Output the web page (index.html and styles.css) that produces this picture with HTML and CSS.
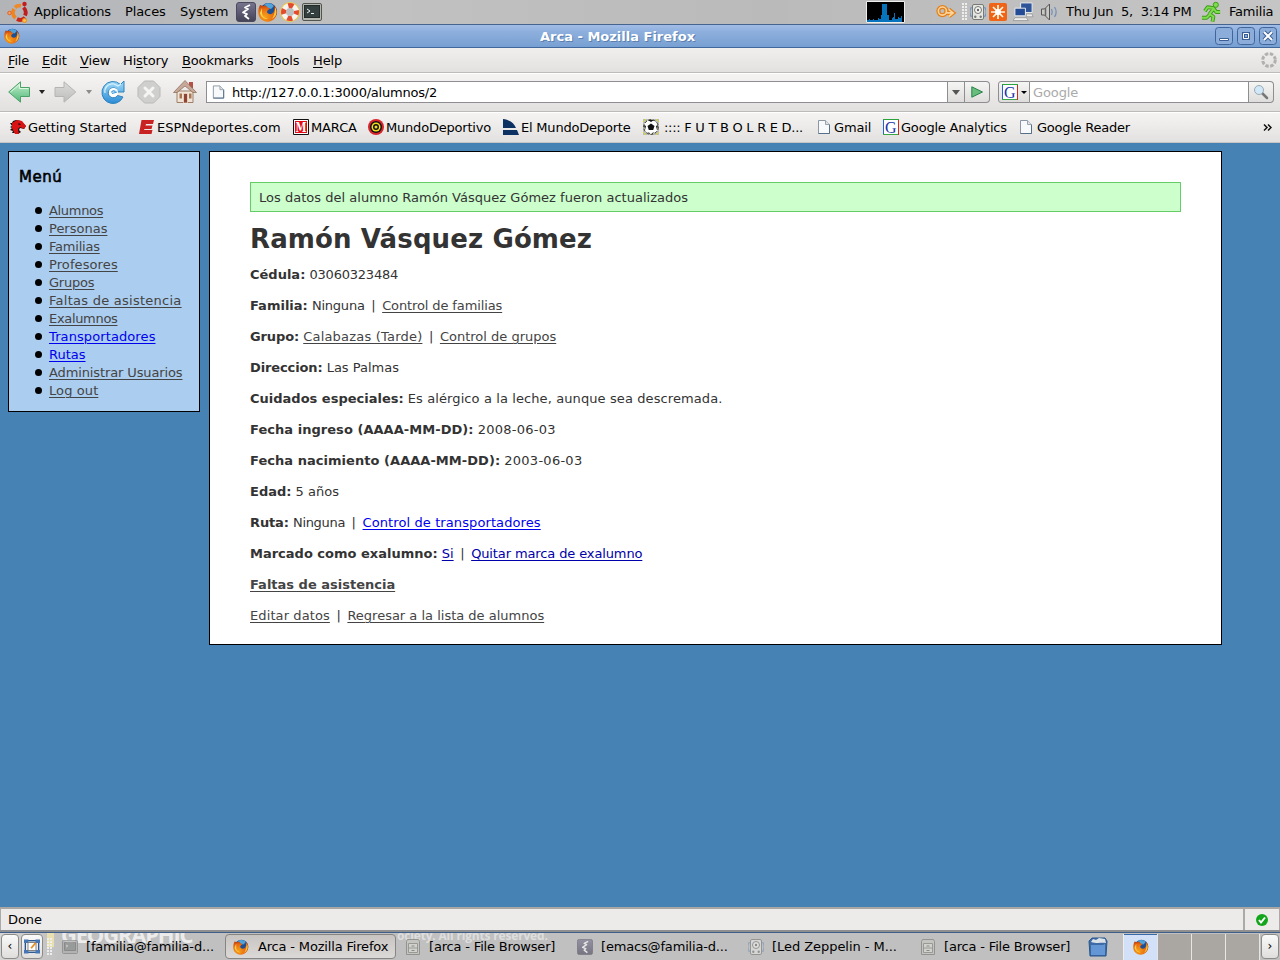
FILE: index.html
```html
<!DOCTYPE html>
<html lang="es">
<head>
<meta charset="utf-8">
<title>Arca - Mozilla Firefox</title>
<link rel="stylesheet" href="styles.css">
</head>
<body>
<svg class="defs" width="0" height="0">
  <defs>
    <radialGradient id="foxg" cx=".35" cy=".7" r=".8"><stop offset="0" stop-color="#f5a21a"/><stop offset=".6" stop-color="#e86a12"/><stop offset="1" stop-color="#a92c08"/></radialGradient>
    <linearGradient id="green" x2="0" y2="1"><stop offset="0" stop-color="#c8f0cf"/><stop offset="1" stop-color="#4fb878"/></linearGradient>
    <linearGradient id="grey" x2="0" y2="1"><stop offset="0" stop-color="#dcdcda"/><stop offset="1" stop-color="#bdbdbb"/></linearGradient>
    <linearGradient id="blue" x2="0" y2="1"><stop offset="0" stop-color="#a5dcf8"/><stop offset="1" stop-color="#2a8bd6"/></linearGradient>
    <linearGradient id="emx" x2="0" y2="1"><stop offset="0" stop-color="#77748f"/><stop offset="1" stop-color="#454357"/></linearGradient>
  </defs>
  <symbol id="firefox" viewBox="0 0 20 20">
    <circle cx="10.500" cy="9.500" r="8.500" fill="#1e4f93"/>
    <path d="M6 3C9 0 14 1 16 4l-3 3-4-1z" fill="#4da3dc"/>
    <path d="M2 3l3 1c2-1 4-.5 4 1 1 1 2 1 3 1-1 2-3 2-3 4 1 3 6 3 7-1 1-2 0-4-1-6 5 3 5 9 2 13-4 5-11 5-15 0C-.5 12 0 7 2 3z" fill="url(#foxg)"/>
    <path d="M2 11c1 4 4 6 8 6-4-1-6-3-6-6L4 6z" fill="#ffd34d"/>
    <path d="M17 5c3 5 1 10-3 12 2-3 3-7 3-12z" fill="#fbc83d"/>
  </symbol>
  <symbol id="page" viewBox="0 0 16 16">
    <path d="M2.500 1.500h7l4 4v9h-11z" fill="#f8f9fa" stroke="#8b97a5"/>
    <path d="M2.500 14.500h11v-9" fill="none" stroke="#567089"/>
    <path d="M9.500 1.500v4h4" fill="#dfe3e7" stroke="#9aa4af"/>
  </symbol>
  <symbol id="google" viewBox="0 0 16 16">
    <path d="M0 0h16v16H0z" fill="#fff"/>
    <path d="M.5 15V.5" stroke="#2166d8"/><path d="M0 .5h16" stroke="#2aa33a"/><path d="M15.500 1v15" stroke="#d8261c"/><path d="M0 15.500h15" stroke="#3aa847"/>
    <text x="7.800" y="13.500" class="g-letter">G</text>
  </symbol>
  <symbol id="emacs" viewBox="0 0 20 20">
    <rect x=".5" y=".5" width="19" height="19" rx="2.500" fill="url(#emx)" stroke="#4b4960"/>
    <path d="M14 3l-5 2.500 3 1.500-5 3.500 4 1.500-2 2 4 3" fill="none" stroke="#fff" stroke-width="1.800" stroke-linejoin="round"/>
  </symbol>
  <symbol id="cabinet" viewBox="0 0 16 16">
    <path d="M2.500 .5h11l1 2v13h-13v-13z" fill="#c4c5c1" stroke="#92938e"/>
    <path d="M3.500 4.500h9v9h-9zM3.500 9h9" fill="#d1d2ce" stroke="#989994"/><path d="M6.500 7h3M6.500 11.500h3" stroke="#888"/>
  </symbol>
  <symbol id="speaker" viewBox="0 0 16 16">
    <path d="M1.500 3c-2 3-2 7 0 10M14.500 3c2 3 2 7 0 10" fill="none" stroke="#7795bb" stroke-width="1.300"/>
    <rect x="2.500" y=".5" width="11" height="15" rx="1.500" fill="#e5e5e2" stroke="#777974"/>
    <circle cx="8" cy="6" r="3.500" fill="#f5f5f3" stroke="#777974"/><circle cx="8" cy="6" r="1.200" fill="#666"/>
    <circle cx="5.300" cy="12.800" r="1.200" fill="#777"/><circle cx="10.700" cy="12.800" r="1.200" fill="#777"/>
  </symbol>
</svg>

<header class="panel">
  <svg class="ubuntu" viewBox="0 0 22 22"><g fill="none" stroke-width="3.800"><path d="M8 6.500A7 7 0 0 1 14 4.800" stroke="#ef8a2a"/><path d="M16.500 6.500a7 7 0 0 1 1.500 8" stroke="#c01d1d"/><path d="M7 8a7 7 0 0 0 1.500 9" stroke="#f0841f"/><path d="M10 18c3 1.500 6 1 8-1.500" stroke="#c7281b"/></g><circle cx="2.500" cy="12" r="1.800" fill="#f3a065" stroke="#dd662a"/><circle cx="17.500" cy="3" r="2.200" fill="#c51b1b"/><circle cx="17.500" cy="19.500" r="2" fill="#ffc24a" stroke="#ee8b1c"/></svg>
  <span class="p-apps">Applications</span><span class="p-places">Places</span><span class="p-system">System</span>
  <div class="launchers">
    <svg><use href="#emacs"/></svg>
    <svg><use href="#firefox"/></svg>
    <svg viewBox="0 0 20 20"><circle cx="10" cy="10" r="9" fill="none" stroke="#e9c84e" stroke-width="2"/><circle cx="10" cy="10" r="6.500" fill="none" stroke="#f7f4ef" stroke-width="5"/><circle cx="10" cy="10" r="6.500" fill="none" stroke="#e34b2e" stroke-width="5" stroke-dasharray="5.100 5.100" stroke-dashoffset="2.550"/></svg>
    <svg viewBox="0 0 20 20"><rect x=".5" y="1.500" width="19" height="17" rx="1.500" fill="#b4b6b0" stroke="#52544f"/><rect x="2.500" y="3.500" width="15" height="12" fill="#33403f" stroke="#242a29"/><path d="M5 7l3 2-3 2M9 11.500h3" fill="none" stroke="#eee"/></svg>
  </div>
  <svg class="graph" viewBox="0 0 39 22"><path d="M.5 .5h38v21H.5z" fill="#000" stroke="#eee"/><path d="M1 21v-2h2v-1h1v1h3v-1h1v1h4v-2h1v1h2v-4h1V3h5v11h2v5h3v-2h1v-1h1v-4h1v6h3v-2h1v1h2v-2h1v6z" fill="#0873bd"/></svg>
  <svg class="keyring" viewBox="0 0 22 20"><g fill="none" stroke="#e2801a" stroke-width="4.500"><circle cx="7" cy="9" r="4.500"/><path d="M11 11h7M14 7l5 4-5 4"/></g><g fill="none" stroke="#ffd39b" stroke-width="1.800"><circle cx="7" cy="9" r="4.500"/><path d="M11 11h7M14 7l5 4-5 4"/></g></svg>
  <svg class="grip" viewBox="0 0 5 18"><path d="M1 0v18M4 0v18" stroke="#eee" stroke-width="2" stroke-dasharray="2 1"/></svg>
  <svg class="tray1"><use href="#speaker"/></svg>
  <svg class="tray2" viewBox="0 0 18 18"><rect width="18" height="18" rx="2" fill="#ef6417"/><path d="M9 2v14M2 9h14M4 4l10 10M14 4L4 14" stroke="#fff6df" stroke-width="1.700"/><circle cx="9" cy="9" r="3" fill="#fff"/></svg>
  <svg class="tray3" viewBox="0 0 22 20"><g stroke="#eee"><path d="M8 .5h12v10H8z" fill="#2e5599"/><path d="M2 6h11v8H2z" fill="#234b96"/></g><path d="M14 12h6l1 3h-7zM2 16h12l2 3H0z" fill="#eee" stroke="#888" stroke-width=".7"/></svg>
  <svg class="tray4" viewBox="0 0 18 18"><path d="M1 6h3l5-5v16l-5-5H1z" fill="#c9cac6" stroke="#555"/><path d="M5 5v8" stroke="#666" stroke-width="1.500"/><path d="M11 6c1 2 1 4 0 6M14 4c2 3 2 7 0 10" fill="none" stroke="#7390b7" stroke-width="1.300"/></svg>
  <span class="clock">Thu Jun&nbsp; 5,&nbsp; 3:14 PM</span>
  <svg class="runner" viewBox="0 0 22 22"><g fill="none" stroke="#3e991b" stroke-width="4" stroke-linejoin="round"><path d="M13 8l-4 5 4 3-1 5M9 14l-3 3H1M4 10l3-4 6 1 3 4h4"/></g><g fill="none" stroke="#7ddd4c" stroke-width="2"><path d="M13 8l-4 5 4 3-1 5M9 14l-3 3H1M4 10l3-4 6 1 3 4h4"/></g><circle cx="15.500" cy="3.500" r="2.700" fill="#7ddd4c" stroke="#3e991b"/></svg>
  <span class="user">Familia</span>
</header>

<div class="titlebar">
  <svg class="tb-icon"><use href="#firefox"/></svg>
  <span class="tb-title">Arca - Mozilla Firefox</span>
  <div class="winbtns">
    <svg viewBox="0 0 18 18"><rect class="wb" x=".5" y=".5" width="17" height="17" rx="3"/><path d="M4.500 11.500h9v2h-9z" fill="#fff" stroke="#3b5f95"/></svg>
    <svg viewBox="0 0 18 18"><rect class="wb" x=".5" y=".5" width="17" height="17" rx="3"/><path d="M6.500 6.500h5v5h-5z" fill="none" stroke="#3b5f95" stroke-width="3"/><path d="M6.500 6.500h5v5h-5z" fill="none" stroke="#fff"/></svg>
    <svg viewBox="0 0 18 18"><rect class="wb" x=".5" y=".5" width="17" height="17" rx="3"/><path d="M5 5l8 8M13 5l-8 8" stroke="#3b5f95" stroke-width="4"/><path d="M5 5l8 8M13 5l-8 8" stroke="#fff" stroke-width="2"/></svg>
  </div>
</div>

<nav class="menubar">
  <span class="m1"><u>F</u>ile</span><span class="m2"><u>E</u>dit</span><span class="m3"><u>V</u>iew</span><span class="m4">Hi<u>s</u>tory</span><span class="m5"><u>B</u>ookmarks</span><span class="m6"><u>T</u>ools</span><span class="m7"><u>H</u>elp</span>
  <svg class="throbber" viewBox="0 0 16 16"><circle cx="8" cy="8" r="6.300" fill="none" stroke="#b1b0ae" stroke-width="3" stroke-dasharray="3.450 1.500"/></svg>
</nav>

<div class="navbar">
  <svg class="n-back" viewBox="0 0 22 22"><path d="M.7 11L12.500 .8v5.700h9v9h-9v5.700z" fill="url(#green)" stroke="#4ba069"/><path d="M2.500 11l9-7.500v4h9" fill="none" stroke="#dcf8e0"/></svg>
  <svg class="n-dd1" viewBox="0 0 7 4"><path d="M0 0h6L3 4z" fill="#222"/></svg>
  <svg class="n-fwd" viewBox="0 0 22 22"><path d="M21.300 11L9.500 .8v5.700h-9v9h9v5.700z" fill="url(#grey)" stroke="#b4b4b2"/></svg>
  <svg class="n-dd2" viewBox="0 0 7 4"><path d="M0 0h6L3 4z" fill="#8b8b89"/></svg>
  <svg class="n-reload" viewBox="0 0 24 24"><path d="M23 1v11H12.500l3-3A5 5 0 1 0 16.500 15.500l5.500 1.500A11 11 0 1 1 19.500 4.500z" fill="url(#blue)" stroke="#2d83be"/><path d="M4 13C3 8 7 3 13 4l4 2 3-2" fill="none" stroke="#d5f0fd" stroke-width="1.200"/><circle cx="12.500" cy="12.500" r="4.500" fill="#fff"/><path d="M11 13.500l5-1.500M10.500 12.500c.5-2 3-2 4-1" fill="none" stroke="#3a98da" stroke-width="1.300"/></svg>
  <svg class="n-stop" viewBox="0 0 24 24"><path d="M7.500 1h9L23 7.500v9L16.500 23h-9L1 16.500v-9z" fill="#cfcfcd" stroke="#b8b8b6"/><path d="M8 8l8 8M16 8l-8 8" stroke="#f5f5f4" stroke-width="3" stroke-linecap="round"/></svg>
  <svg class="n-home" viewBox="0 0 24 24"><path d="M16 2h4v6h-4z" fill="#b55245"/><path d="M4 11h16v11.500H4z" fill="#f0e4d7" stroke="#9c8068"/><path d="M12 .5L.5 12.500H4L12 6l8 6.500h3.500z" fill="#c8a999" stroke="#876751" stroke-width=".7"/><path d="M6.500 13.500h2.500v5H6.500zM16 13.500h2.500v5H16z" fill="#a87552"/><path d="M10.500 13.500h4V23h-4z" fill="#8d4434" stroke="#fff3e4" stroke-width=".6"/></svg>
  <div class="urlbar"><svg><use href="#page"/></svg><span>http://127.0.0.1:3000/alumnos/2</span></div>
  <div class="url-dd"><svg viewBox="0 0 8 5"><path d="M0 0h8L4 5z" fill="#555"/></svg></div>
  <div class="go"><svg viewBox="0 0 12 12"><path d="M.8 .8L11.500 6 .8 11.200z" fill="#69bd7d" stroke="#288348"/></svg></div>
  <div class="engine"><svg class="eg"><use href="#google"/></svg><svg class="ed" viewBox="0 0 6 3"><path d="M0 0h6L3 3z"/></svg></div>
  <div class="search">Google</div>
  <div class="sbtn"><svg viewBox="0 0 16 16"><path d="M9 9l5 5" stroke="#777" stroke-width="2.500" stroke-linecap="round"/><circle cx="6" cy="6" r="4.500" fill="#d0e8f8" stroke="#9baab4"/></svg></div>
</div>

<div class="bookmarks">
  <span class="b1"><svg viewBox="0 0 16 16"><path d="M0 4h2l1-2 3-1 5 1 5 5-2 3-4-1-1 2 2 2-3 2-3-1H2l1-2-3-1 2-2-2-1 2-1z" fill="#111"/><path d="M2 4l5-3 5 1 4 5-2 3-4-2-2 2 1 5-4 0-3-6z" fill="#d91313"/><path d="M8 5h2v1" fill="none" stroke="#111"/></svg>Getting Started</span>
  <span class="b2"><svg viewBox="0 0 16 16"><path d="M2.500 1H15l-1 4H7l-.5 1.500h7l-1 3.500H5.500L5 11h8.500l-1 4H0z" fill="#c92222"/></svg>ESPNdeportes.com</span>
  <span class="b3"><svg viewBox="0 0 16 16"><path d="M.5 .5h15v15H.5z" fill="#fff" stroke="#111"/><path d="M2 2h12v12H2z" fill="#e50914"/><text x="8" y="12.500" textLength="11" lengthAdjust="spacingAndGlyphs" class="marca">M</text></svg>MARCA</span>
  <span class="b4"><svg viewBox="0 0 16 16"><circle cx="8" cy="8" r="8" fill="#d8232a"/><circle cx="8" cy="8" r="6" fill="#111"/><circle cx="8" cy="8" r="4.500" fill="#f2df1b"/><circle cx="8" cy="8" r="3" fill="#111"/><circle cx="8" cy="8" r="1.500" fill="#f2df1b"/></svg>MundoDeportivo</span>
  <span class="b5"><svg viewBox="0 0 16 16"><path d="M0 0c7 1 11 4 13 9H0zM0 11h14l2 5H0z" fill="#0b3262"/></svg>El MundoDeporte</span>
  <span class="b6"><svg viewBox="0 0 16 16"><path d="M0 0h16v16H0z" fill="#bbb"/><circle cx="8" cy="8" r="7.300" fill="#fff" stroke="#33331a" stroke-dasharray="3 1.500"/><path d="M8 4.500l3.500 2.500-1.300 4H5.800L4.500 7zM5 1h6L8 3zM1 6l2 1-1 4zM15 6l-2 1 1 4zM4 13l3 1v1zM12 13l-3 1v1z" fill="#111"/><path d="M0 3l3-3M13 0l3 3M0 13l3 3M13 16l3-3" stroke="#dddd20"/></svg><i>:::: F U T B O L R E D...</i></span>
  <span class="b7"><svg><use href="#page"/></svg>Gmail</span>
  <span class="b8"><svg><use href="#google"/></svg>Google Analytics</span>
  <span class="b9"><svg><use href="#page"/></svg>Google Reader</span>
  <svg class="more" viewBox="0 0 9 7"><path d="M1 .5l3 3-3 3M5 .5l3 3-3 3" fill="none" stroke="#111" stroke-width="1.500"/></svg>
</div>

<main class="view">
  <aside class="menu">
    <h3>Menú</h3>
    <ul>
      <li><a class="tight3">Alumnos</a></li><li><a>Personas</a></li><li><a class="tight2">Familias</a></li><li><a class="wide1">Profesores</a></li><li><a class="tight2">Grupos</a></li><li><a class="wide3">Faltas de asistencia</a></li><li><a class="tight3">Exalumnos</a></li><li><a class="new wide1">Transportadores</a></li><li><a class="new">Rutas</a></li><li><a class="tight1">Administrar Usuarios</a></li><li><a class="wide1">Log out</a></li>
    </ul>
  </aside>
  <section class="content">
    <div class="notice">Los datos del alumno Ramón Vásquez Gómez fueron actualizados</div>
    <h1>Ramón Vásquez Gómez</h1>
    <p><b>Cédula:</b> <span class="tight2">03060323484</span></p>
    <p><b>Familia:</b> <span class="tight2">Ninguna</span><i class="sep">|</i><a class="tight1">Control de familias</a></p>
    <p><b class="tight1">Grupo:</b> <a class="wide2">Calabazas (Tarde)</a><i class="sep">|</i><a>Control de grupos</a></p>
    <p><b class="tight1">Direccion:</b> Las Palmas</p>
    <p><b>Cuidados especiales:</b> <span class="wide1">Es alérgico a la leche, aunque sea descremada.</span></p>
    <p><b class="date">Fecha ingreso (AAAA-MM-DD):</b> <span class="wide3">2008-06-03</span></p>
    <p><b class="date">Fecha nacimiento (AAAA-MM-DD):</b> <span class="wide3">2003-06-03</span></p>
    <p><b>Edad:</b> 5 años</p>
    <p><b class="tight1">Ruta:</b> <span class="tight3">Ninguna</span><i class="sep">|</i><a class="new wide1">Control de transportadores</a></p>
    <p><b>Marcado como exalumno:</b> <a class="new dark">Si</a><i class="sep">|</i><a class="new dark tight1">Quitar marca de exalumno</a></p>
    <p><a><b>Faltas de asistencia</b></a></p>
    <p><a class="wide1">Editar datos</a><i class="sep">|</i><a>Regresar a la lista de alumnos</a></p>
  </section>
</main>

<div class="status"><div class="done">Done</div><div class="ok"><svg viewBox="0 0 12 12"><circle cx="6" cy="6" r="6" fill="#13a51b"/><path d="M3 6l2 2.500L9 3.500" fill="none" stroke="#fff" stroke-width="2"/></svg></div></div>

<footer class="taskbar">
  <div class="wall"><span class="geo">GEOGRAPHIC</span><span class="rights">ociety. All rights reserved.</span></div>
  <div class="arrow a-left">‹</div>
  <div class="desk"><svg viewBox="0 0 18 16"><rect x="1.500" y="1.500" width="15" height="13" fill="#eee" stroke="#24538f" stroke-width="1.500"/><path d="M0 0h5v4H0zM13 0h5v4h-5zM0 12h5v4H0zM13 12h5v4h-5z" fill="#4677b4"/><rect x="4.500" y="3.500" width="9" height="9" fill="#fff" stroke="#777"/><path d="M8 10l5-6" stroke="#e88b18" stroke-width="2"/></svg></div>
  <svg class="grip t-grip" viewBox="0 0 5 18"><path d="M1 0v18M4 0v18" stroke="#eee" stroke-width="2" stroke-dasharray="2 1"/></svg>
  <div class="task t1"><svg class="faded" viewBox="0 0 16 16"><rect x=".5" y="1.500" width="15" height="13" rx="1" fill="#aaa" stroke="#777"/><path d="M2.500 3.500h11v8h-11z" fill="#7d8381" stroke="#666"/><path d="M4 6l2 1-2 1" fill="none" stroke="#ccc"/></svg>[familia@familia-d...</div>
  <div class="task t2"><svg><use href="#firefox"/></svg>Arca - Mozilla Firefox</div>
  <div class="task t3"><svg><use href="#cabinet"/></svg>[arca - File Browser]</div>
  <div class="task t4"><svg class="faded"><use href="#emacs"/></svg>[emacs@familia-d...</div>
  <div class="task t5"><svg class="faded"><use href="#speaker"/></svg>[Led Zeppelin - M...</div>
  <div class="task t6"><svg><use href="#cabinet"/></svg>[arca - File Browser]</div>
  <svg class="trash" viewBox="0 0 20 20"><path d="M1 4l3-3h13l2 3-1 15H2z" fill="#3e6ba6" stroke="#29578f"/><path d="M3 5l2-3 3 1 3-2 6 1 1 4c-4-1-8 1-15-1z" fill="#dce3e8"/><path d="M3 8h12l2-1v11H3z" fill="#6296d4"/></svg>
  <div class="pager"><div class="on"><svg><use href="#firefox"/></svg></div><div></div><div></div><div></div></div>
  <div class="arrow a-right">›</div>
</footer>
</body>
</html>
```
FILE: styles.css
```css
* { box-sizing: border-box; }
html, body { margin: 0; }
body { width: 1280px; height: 960px; overflow: hidden; display: flex; flex-direction: column; background: #4682b4; font-family: "DejaVu Sans", Verdana, sans-serif; font-size: 13px; line-height: 16px; color: #000; }
svg { display: block; flex: none; }
.defs { position: absolute; }
span, i { white-space: pre; }
i { font-style: normal; }
.g-letter { font: 16px "Liberation Serif", serif; fill: #2033a8; text-anchor: middle; letter-spacing: 0; }
.marca { font: bold 13px "DejaVu Serif", serif; fill: #fff; text-anchor: middle; letter-spacing: 0; }

.wide1 { letter-spacing: .1px; }
.wide2 { letter-spacing: .2px; }
.wide3 { letter-spacing: .26px; }
.tight1 { letter-spacing: -.12px; }
.tight2 { letter-spacing: -.22px; }
.tight3 { letter-spacing: -.32px; }
.date { letter-spacing: .04px; }

.panel { flex: none; height: 24px; display: flex; align-items: center; background: linear-gradient(90deg, #b2b4b8, #c1c1c1 30%, #bababa 60%, #c5c5c5); }
.panel > span { flex: none; }
.panel > svg { flex: none; }
.ubuntu { width: 22px; height: 22px; margin: 0 5px 0 7px; }
.p-apps { width: 91px; letter-spacing: -.22px; }
.p-places { width: 55px; letter-spacing: -.1px; }
.p-system { width: 56px; }
.launchers { flex: none; display: flex; gap: 2px; width: 630px; }
.launchers svg { width: 20px; height: 20px; }
.graph { width: 39px; height: 22px; margin-right: 30px; }
.keyring { width: 22px; height: 18px; margin-right: 5px; }
.grip { width: 5px; height: 18px; }
.tray1 { width: 16px; height: 16px; margin: 0 3px 0 3px; }
.tray2 { width: 18px; height: 18px; margin-right: 6px; }
.tray3 { width: 21px; height: 20px; margin-right: 6px; }
.tray4 { width: 19px; height: 18px; margin-right: 7px; }
.clock { width: 135px; letter-spacing: -.24px; }
.runner { width: 21px; height: 22px; margin-right: 7px; }
.user { letter-spacing: -.2px; }

.titlebar { flex: none; height: 24px; display: flex; align-items: center; border-top: 1px solid #46648e; border-bottom: 1px solid #41679d; background: linear-gradient(#a2bde6, #8eafdd 30%, #77a0d2); }
.tb-icon { width: 16px; height: 16px; margin-left: 4px; }
.tb-title { flex: none; width: 675px; margin-left: 520px; padding-top: 1px; font-weight: bold; color: #fff; text-shadow: 1px 1px #5d7fae; }
.winbtns { display: flex; gap: 4px; }
.winbtns svg { width: 18px; height: 18px; }
.wb { fill: #8cadd9; stroke: #3f659c; }

.menubar { flex: none; height: 25px; display: flex; align-items: center; background: linear-gradient(#f0efee, #e3e1df); border-bottom: 1px solid #bebcba; padding-left: 8px; letter-spacing: -.15px; }
.menubar span { padding-top: 1px; }
.menubar u { text-underline-offset: 2px; }
.m1 { width: 34px; } .m2 { width: 38px; } .m3 { width: 43px; } .m4 { width: 59px; } .m5 { width: 86px; } .m6 { width: 45px; } .m7 { width: 40px; }
.throbber { width: 16px; height: 16px; margin-left: auto; margin-right: 3px; }

.navbar { flex: none; height: 39px; display: flex; align-items: center; padding-bottom: 1px; border-bottom: 1px solid #bdbbb9; border-top: 1px solid #fff; background: linear-gradient(#f5f4f3, #e2e0de); }
.n-back { width: 22px; height: 22px; margin-left: 8px; }
.n-dd1 { width: 7px; height: 4px; margin: 0 8px 0 9px; }
.n-fwd { width: 23px; height: 22px; }
.n-dd2 { width: 7px; height: 4px; margin: 0 8px 0 9px; }
.n-reload { width: 24px; height: 24px; margin-right: 12px; }
.n-stop { width: 24px; height: 24px; margin-right: 12px; }
.n-home { width: 24px; height: 24px; margin-right: 9px; }
.urlbar { width: 742px; height: 22px; display: flex; align-items: center; gap: 6px; padding-left: 4px; background: #fff; border: 1px solid #8d8d92; letter-spacing: -.22px; }
.urlbar svg { width: 15px; height: 16px; }
.urlbar span { padding-top: 2px; }
.url-dd, .go, .engine, .sbtn { height: 22px; border: 1px solid #8d8d92; display: flex; align-items: center; justify-content: center; background: linear-gradient(#f5f5f4, #dedddb); }
.url-dd { width: 17px; border-left: 0; }
.url-dd svg { width: 8px; height: 5px; }
.go { width: 25px; border-left: 0; border-radius: 0 4px 4px 0; }
.go svg { width: 12px; height: 12px; }
.engine { width: 32px; margin-left: 8px; border-radius: 3px 0 0 3px; justify-content: flex-start; padding-left: 3px; }
.eg { width: 16px; height: 16px; }
.ed { width: 6px; height: 3px; margin-left: 3px; }
.search { width: 219px; height: 22px; padding: 3px 0 0 3px; background: #fff; border: solid #8d8d92; border-width: 1px 1px 1px 0; color: #aaa; letter-spacing: -.1px; }
.sbtn { width: 25px; border-left: 0; border-radius: 0 4px 4px 0; }
.sbtn svg { width: 16px; height: 16px; }

.bookmarks { flex: none; height: 31px; display: flex; align-items: center; padding-left: 10px; border-top: 1px solid #fff; border-bottom: 1px solid #c8c5c2; background: linear-gradient(#f5f4f3, #e3e1df); letter-spacing: -.12px; }
.bookmarks span { display: flex; flex: none; gap: 2px; }
.bookmarks span svg { width: 16px; height: 16px; margin-top: -1px; }
.b1 { width: 129px; } .b2 { width: 154px; } .b3 { width: 75px; } .b4 { width: 135px; } .b5 { width: 140px; } .b6 { width: 173px; } .b7 { width: 67px; } .b8 { width: 135px; } .b9 { width: 140px; }
.bookmarks .b2 { letter-spacing: 0; }
.bookmarks .b4, .bookmarks .b5, .bookmarks .b8 { letter-spacing: -.2px; }
.bookmarks .b6 { gap: 5px; letter-spacing: -.27px; }
.bookmarks .b9 { gap: 3px; letter-spacing: -.25px; }
.more { width: 9px; height: 7px; margin-left: auto; margin-right: 8px; }

.view { flex: 1; display: flex; align-items: flex-start; gap: 9px; padding: 8px; background: #4682b4; line-height: 18px; }
.menu { width: 192px; height: 261px; border: 1px solid #000; background: #abcdef; padding: 16px 10px; }
.menu h3 { margin: 0 0 16px; font-size: 15px; line-height: 18px; font-weight: normal; -webkit-text-stroke: .6px #000; letter-spacing: .5px; }
.menu ul { margin: 0; padding: 0 0 0 30px; white-space: nowrap; list-style: none; }
.menu li { position: relative; }
.menu li::before { content: ""; position: absolute; left: -14px; top: 5px; width: 7px; height: 7px; border-radius: 50%; background: #000; }
a { color: #444; text-decoration: underline; text-underline-offset: 2px; text-decoration-thickness: 1px; }
a.new { color: #00e; }
a.dark { color: #00a; }
.content { width: 1013px; height: 494px; border: 1px solid #000; background: #fff; color: #333; padding: 30px 40px; }
.notice { height: 30px; border: 1px solid #6c6; background: #cfc; padding: 6px 8px; margin-bottom: 10px; letter-spacing: .02px; }
h1 { margin: 0 0 9px; font-size: 26px; line-height: 35px; letter-spacing: .12px; }
.content p { margin: 0 0 13px; }
.sep { display: inline-block; width: 17.500px; text-align: center; }

.status { flex: none; height: 25px; display: flex; background: #edebe9; border-top: 2px solid #aaa6a2; border-bottom: 2px solid #8f8f90; }
.done { flex: 1; padding: 3px 7px 0; border-left: 1px solid #aaa; border-right: 2px solid #aaa; letter-spacing: -.1px; }
.ok { width: 35px; border-right: 1px solid #aaa; display: flex; align-items: center; justify-content: center; }
.ok svg { width: 12px; height: 12px; }

.taskbar { position: relative; flex: none; height: 28px; display: flex; align-items: center; background: linear-gradient(90deg, #d6d6d6, #c0c0c0 60px); border-top: 1px solid #3f5f8a; overflow: hidden; }
.wall { position: absolute; inset: 0; color: #ececec; font-weight: bold; background: linear-gradient(#eadfae, #eadfae) 47px 0 / 7px 14px no-repeat; }
.geo { position: absolute; left: 61px; top: -14px; font: bold 22px "Open Sans", sans-serif; letter-spacing: -1.200px; }
.rights { position: absolute; left: 397px; top: -6px; font: bold 12px "Open Sans", sans-serif; color: #dedede; letter-spacing: -.18px; }
.arrow, .desk { position: relative; flex: none; height: 25px; border: 1px solid #8d8b88; border-radius: 4px; background: linear-gradient(#fafafa, #dfdedc); text-align: center; line-height: 22px; font-size: 12px; }
.a-left { width: 18px; margin: 0 2px 0 1px; }
.desk { width: 22px; padding: 4px 2px; }
.desk svg { width: 16px; height: 15px; }
.t-grip { position: relative; margin: 0 6px 0 4px; }
.task { position: relative; flex: none; height: 25px; display: flex; align-items: center; gap: 8px; white-space: pre; padding-left: 4px; letter-spacing: -.17px; }
.task svg { width: 16px; height: 16px; }
.task svg.faded { opacity: .6; }
.t1 { width: 167px; }
.t2 { width: 171px; padding-left: 7px; padding-top: 1px; gap: 9px; border: 1px solid #878583; border-radius: 4px; background: linear-gradient(#c8c4c1, #dbd9d7); letter-spacing: -.17px; }
.t3 { width: 176px; padding-left: 9px; } .t4 { width: 171px; padding-left: 5px; } .t5 { width: 172px; padding-left: 5px; letter-spacing: -.05px; } .t6 { width: 173px; padding-left: 5px; }
.trash { width: 20px; height: 20px; }
.pager { display: flex; margin-left: 15px; gap: 1px; width: 137px; height: 26px; background: #e8e6e4; border-left: 1px solid #eee; }
.pager div { width: 33px; background: #aaa6a2; display: flex; align-items: center; justify-content: center; }
.pager .on { background: #d2e1f7; border-top: 1px solid #3969a8; }
.pager svg { width: 16px; height: 16px; }
.a-right { width: 18px; margin: 0 1px 0 auto; }
```
